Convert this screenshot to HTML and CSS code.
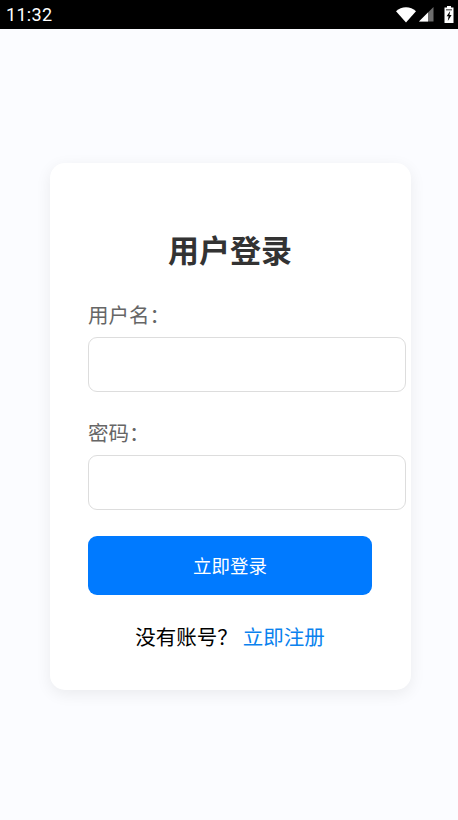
FILE: index.html
```html
<!DOCTYPE html>
<html lang="zh-CN">
<head>
    <meta charset="UTF-8">
    <meta name="viewport" content="width=device-width, initial-scale=1.0">
    <title>用户登录</title>
    <link rel="stylesheet" href="styles.css">
</head>
<body>
    <div class="status-bar">
        <span class="status-time">11:32</span>
        <div class="status-icons">
            <svg class="icon-wifi" width="20" height="16" viewBox="0 0 20 16">
                <path d="M0 4.2C2.8 1.7 6.2 0.3 10 0.3S17.2 1.7 20 4.2L10 15.6Z" fill="#fff"/>
            </svg>
            <svg class="icon-signal" width="15" height="15" viewBox="0 0 15 15">
                <path d="M0 14.5L14.5 0V14.5Z" fill="#6e6e6e"/>
                <path d="M0 14.5L9 5.5V14.5Z" fill="#fff"/>
            </svg>
            <svg class="icon-battery" width="10" height="17" viewBox="0 0 10 17">
                <path d="M3 0H7V1.5H9.5V17H0.5V1.5H3Z" fill="#fff"/>
                <path d="M2 3H8V4.5H2Z" fill="#777"/>
                <path d="M6.2 5L2.6 10.2H4.6L3.8 15L7.6 9H5.4Z" fill="#000"/>
            </svg>
        </div>
    </div>

    <main class="page">
        <form class="login-card">
            <h1 class="login-title">用户登录</h1>

            <div class="form-group">
                <label class="form-label">用户名：</label>
                <input class="form-input" type="text">
            </div>

            <div class="form-group">
                <label class="form-label">密码：</label>
                <input class="form-input" type="password">
            </div>

            <button class="login-btn" type="button">立即登录</button>

            <p class="register-row">没有账号？<a class="register-link" href="#">立即注册</a></p>
        </form>
    </main>
</body>
</html>
```

FILE: styles.css
```css
* {
    margin: 0;
    padding: 0;
    box-sizing: border-box;
}

body {
    width: 458px;
    height: 820px;
    overflow: hidden;
    background: #fbfcff;
    font-family: "Noto Sans CJK SC", "Noto Sans", sans-serif;
}

.status-bar {
    height: 29px;
    background: #000;
    display: flex;
    justify-content: space-between;
    align-items: center;
    padding: 0 4px 0 6px;
}

.status-time {
    color: #fff;
    font-family: Roboto, sans-serif;
    font-size: 18px;
    letter-spacing: 0.3px;
}

.status-icons {
    display: flex;
    align-items: center;
    gap: 3px;
}

.icon-battery {
    margin-left: 7px;
}

.page {
    padding: 134px 47px 0 50px;
}

.login-card {
    width: 361px;
    height: 527px;
    background: #fff;
    border-radius: 15px;
    padding: 64px 39px 0 38px;
    box-shadow: 0 4px 16px rgba(0, 0, 0, 0.07);
}

.login-title {
    font-size: 31px;
    line-height: 44px;
    font-weight: 700;
    color: #333;
    text-align: center;
    margin-bottom: 29.7px;
}

.form-group + .form-group {
    margin-top: 27.6px;
}

.form-label {
    display: block;
    font-size: 20.5px;
    line-height: 27px;
    color: #666;
    margin-bottom: 9px;
}

.form-input {
    display: block;
    width: 318px;
    height: 55px;
    background: #fff;
    border: 1px solid #ddd;
    border-radius: 9px;
}

.login-btn {
    display: block;
    width: 284px;
    height: 59px;
    margin-top: 25.7px;
    background: #007aff;
    color: #fff;
    border: none;
    border-radius: 9px;
    font-family: inherit;
    font-size: 18.5px;
}

.register-row {
    margin-top: 26px;
    font-size: 20.5px;
    line-height: 30px;
    color: #000;
    text-align: center;
}

.register-link {
    color: #0a82ee;
    text-decoration: none;
    margin-left: 5px;
}
```
